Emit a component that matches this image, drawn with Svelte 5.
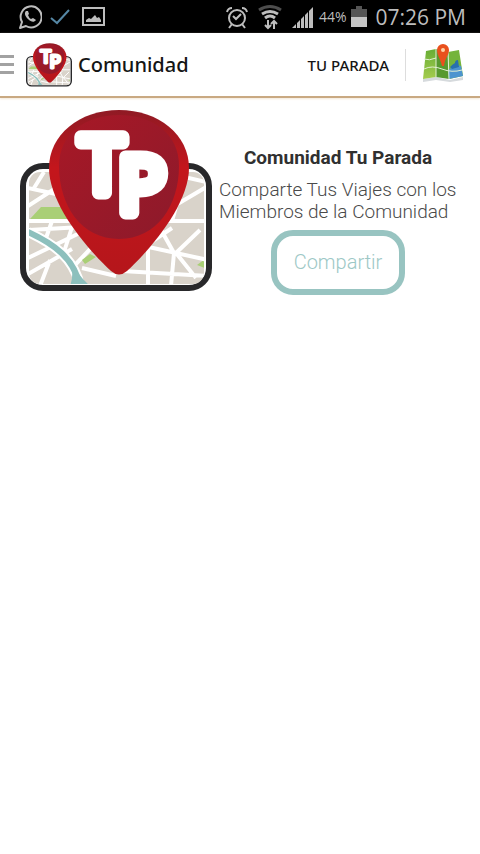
<script lang="ts">
  let menuOpen = $state(false);
  let battery = $state(44);
  let time = $state('07:26 PM');
</script>

{#snippet logo(cls: string)}
  <svg class={cls} viewBox="0 0 192 182" role="img" aria-label="TP">
    <defs>
      <linearGradient id="pin" x1="0" y1="0" x2="0" y2="1">
        <stop offset="0" stop-color="#8f1a24" />
        <stop offset=".35" stop-color="#c4161c" />
        <stop offset="1" stop-color="#b5161b" />
      </linearGradient>
      <linearGradient id="disc" x1="0" y1="0" x2="1" y2="1">
        <stop offset="0" stop-color="#a81826" />
        <stop offset="1" stop-color="#8c1a2b" />
      </linearGradient>
      <clipPath id="land"><rect x="9" y="62" width="175" height="112" rx="11" /></clipPath>
    </defs>
    <rect x="3" y="56" width="186" height="122" rx="20" fill="#fff" stroke="#28282a" stroke-width="6" />
    <g clip-path="url(#land)" fill="none" stroke="#fff" stroke-width="4">
      <rect x="9" y="62" width="175" height="112" fill="#d9d3ca" stroke="none" />
      <path d="M8 78 36 84M8 96 42 74M24 62 14 78M8 111H58L75 126M8 120 62 117M32 111 26 128M8 148 68 119M8 164 52 139M30 150 20 176M52 117 44 142M74 135 54 156M62 158 96 166" />
      <path d="M10 109 21 97H46L54 109Z" fill="#a9cf76" stroke="none" />
      <path d="M62 150 70 144 76 147 65 154Z" fill="#a9cf76" stroke="none" />
      <path d="M177 155 185 149V158Z" fill="#a9cf76" stroke="none" />
      <path d="M130 111H188M112 145 152 118M124 136 188 150M140 118 154 143 151 176M128 132V176M102 161 188 166M180 120 156 143 176 168M144 102 188 76M160 66 186 72M152 111 166 62" />
      <path d="M8 122C34 134 54 148 60 176" stroke="#fff" stroke-width="10" />
      <path d="M8 122C34 134 54 148 60 176" stroke="#8dc0bd" stroke-width="6" />
      <path d="M51 152Q57 164 70 176H50Q54 166 51 152Z" fill="#8dc0bd" stroke="none" />
    </g>
    <path d="M99 0C139 0 169 25 169 58 169 93 133 137 107 161Q99 168 91 161C65 137 29 93 29 58 29 25 59 0 99 0Z" fill="url(#pin)" />
    <path d="M99 5C133 5 159 24 159 56 159 95 137 129 99 129S39 95 39 56C39 24 65 5 99 5Z" fill="url(#disc)" />
    <g class="initials">
      <text x="60" y="83">T</text>
      <text x="98" y="103">P</text>
    </g>
  </svg>
{/snippet}

<div class="status">
  <div class="side">
    <svg width="24" height="26" viewBox="0 0 24 26" fill="none" stroke="#bdbdbd" stroke-width="2">
      <path d="M2 24 4 18A10.500 10.500 0 1 1 8 22Z" stroke-linejoin="round" />
      <path d="M8 7C6 9 7 12 10 15 13 18 16 19 18 16L15 14 13 15Q11 14 10 11L11 10 10 7Z" fill="#bdbdbd" stroke="none" />
    </svg>
    <svg width="20" height="26" viewBox="0 0 20 26"><path d="M1 14 7 19 19 6" fill="none" stroke="#5587a5" stroke-width="2" /></svg>
    <svg class="photo" width="23" height="26" viewBox="0 0 23 26">
      <rect x="1" y="4" width="21" height="17" fill="none" stroke="#bdbdbd" stroke-width="2" />
      <path d="M4 18V16L7 14 9 15 13 11 15 14 17 13 19 16V18Z" fill="#bdbdbd" />
    </svg>
  </div>
  <div class="side">
    <svg width="22" height="26" viewBox="0 0 22 26" fill="none" stroke="#bdbdbd" stroke-width="2">
      <circle cx="11" cy="14" r="8" />
      <path d="M7 12 10 15 15 10M1 8Q2 4 6 4M21 8Q20 4 16 4M6 20 3 24M16 20 19 24" />
    </svg>
    <svg class="wifi" width="24" height="26" viewBox="0 0 24 26" fill="none" stroke="#bdbdbd" stroke-width="3">
      <path d="M1 6Q12-1 23 6" stroke="#4d4d4d" />
      <path d="M4 10Q12 5 20 10M7 14Q12 10 17 14" />
      <path d="M10 16V24M7 21 10 24 13 21M16 25V17M13 20 16 17 19 20" stroke-width="2" />
    </svg>
    <svg class="signal" width="22" height="26" viewBox="0 0 22 26" fill="#bdbdbd">
      <path d="M0 24 4 20V24ZM5 24V19L8 16V24ZM9 24V15L12 12V24ZM13 24V11L16 8V24ZM17 24V7L21 3V24Z" />
    </svg>
    <span class="percent">{battery}%</span>
    <svg width="16" height="26" viewBox="0 0 16 26">
      <path d="M0 5H5V2H11V5H16V14H0Z" fill="#555" />
      <path d="M0 13H16V23H0Z" fill="#c4c4c4" />
    </svg>
    <span class="time">{time}</span>
  </div>
</div>

<header>
  <button class="menu" aria-label="Menú" aria-expanded={menuOpen} onclick={() => (menuOpen = !menuOpen)}>
    <span></span><span></span><span></span>
  </button>
  {@render logo('logo-small')}
  <h1>Comunidad</h1>
  <a class="brand" href="#parada">TU PARADA</a>
  <button class="map" aria-label="Mapa">
    <svg width="42" height="40" viewBox="0 0 42 40">
      <defs>
        <linearGradient id="grass" x1="0" y1="0" x2="0" y2="1">
          <stop offset="0" stop-color="#67ad35" />
          <stop offset="1" stop-color="#a5cc4e" />
        </linearGradient>
      </defs>
      <path d="M1 36 14 34 28 37 41 34V37L28 39 14 37 1 39Z" fill="#d6dadd" />
      <path d="M4 8 14 6V34L1 36Z" fill="url(#grass)" />
      <path d="M14 6 26 9 27 36 14 34Z" fill="#57992f" />
      <path d="M26 9 37 7 41 33 27 36Z" fill="#74b43b" />
      <path d="M26 27 31 24 35 22 39 23 41 33 27 36Z" fill="#4c94cf" />
      <path d="M28 24Q31 21 33 20 33 17 36 17L37 24 30 26Z" fill="#276fae" />
      <path d="M2 26Q10 22 20 26T40 27M14 6V34M26 9 27 36M2 16Q7 18 14 15" fill="none" stroke="#e3f0d4" stroke-width="1" />
      <path d="M20 23C18 15 15 12 15 7A6 6 0 0 1 27 7C27 12 23 15 22 23Z" fill="#e9501c" />
      <circle cx="21" cy="7" r="2" fill="#ffd2a5" />
    </svg>
  </button>
</header>

<main>
  {@render logo('logo-large')}
  <section>
    <h2>Comunidad Tu Parada</h2>
    <p>Comparte Tus Viajes con los Miembros de la Comunidad</p>
    <button class="share">Compartir</button>
  </section>
</main>

<style>
  :global(body) { background: #fff; font-family: Roboto, sans-serif; }
  h1, h2, p { margin: 0; }
  svg { display: block; flex: none; }
  button { border: 0; padding: 0; background: none; cursor: pointer; }

  .status {
    display: flex; justify-content: space-between; align-items: center;
    height: 33px; padding: 0 14px 0 18px; background: #000; color: #bdbdbd;
    font-family: "Open Sans", sans-serif;
  }
  .side { display: flex; align-items: center; gap: 8px; }
  .photo { margin-left: 4px; }
  .wifi, .signal { margin-left: 2px; }
  .percent { margin: 0 -3px; font-size: 14px; }
  .time { font-size: 21px; white-space: nowrap; }

  header {
    display: flex; align-items: center; height: 63px;
    border-bottom: 2px solid #c9a982; box-shadow: 0 1px 2px #f3e8d8;
    font-family: "Noto Sans", sans-serif; color: #151515;
  }
  .menu { display: flex; flex-direction: column; gap: 5px; width: 14px; margin-right: 12px; }
  .menu span { height: 3px; background: #a2a2a2; }
  .logo-small { width: 46px; height: 44px; }
  h1 { margin-left: 6px; font-size: 20px; font-weight: 500; }
  .brand {
    margin-left: auto; padding-right: 16px; border-right: 1px solid #ddd;
    line-height: 32px; font-size: 15px; font-weight: 500; color: #151515; text-decoration: none;
  }
  .map { margin: 0 16px 4px; }

  main { display: flex; align-items: flex-start; gap: 7px; padding: 12px 23px 12px 20px; }
  .logo-large { width: 192px; height: 182px; }
  .initials {
    font: 400 79px "Noto Sans", sans-serif; fill: #fff;
    stroke: #fff; stroke-width: 13px; stroke-linejoin: round;
  }
  section { display: flex; flex-direction: column; align-items: center; padding-top: 36px; }
  h2 { font-size: 19px; line-height: 24px; font-weight: 700; color: #303030; }
  p { margin: 9px 0 7px; font-size: 19px; line-height: 22px; font-weight: 300; color: #4a4a4a; }
  .share {
    padding: 15px 17px; border: 6px solid #98c4c1; border-radius: 22px;
    font: 300 20px/23px Roboto, sans-serif; color: #9dc8c6;
  }
</style>
